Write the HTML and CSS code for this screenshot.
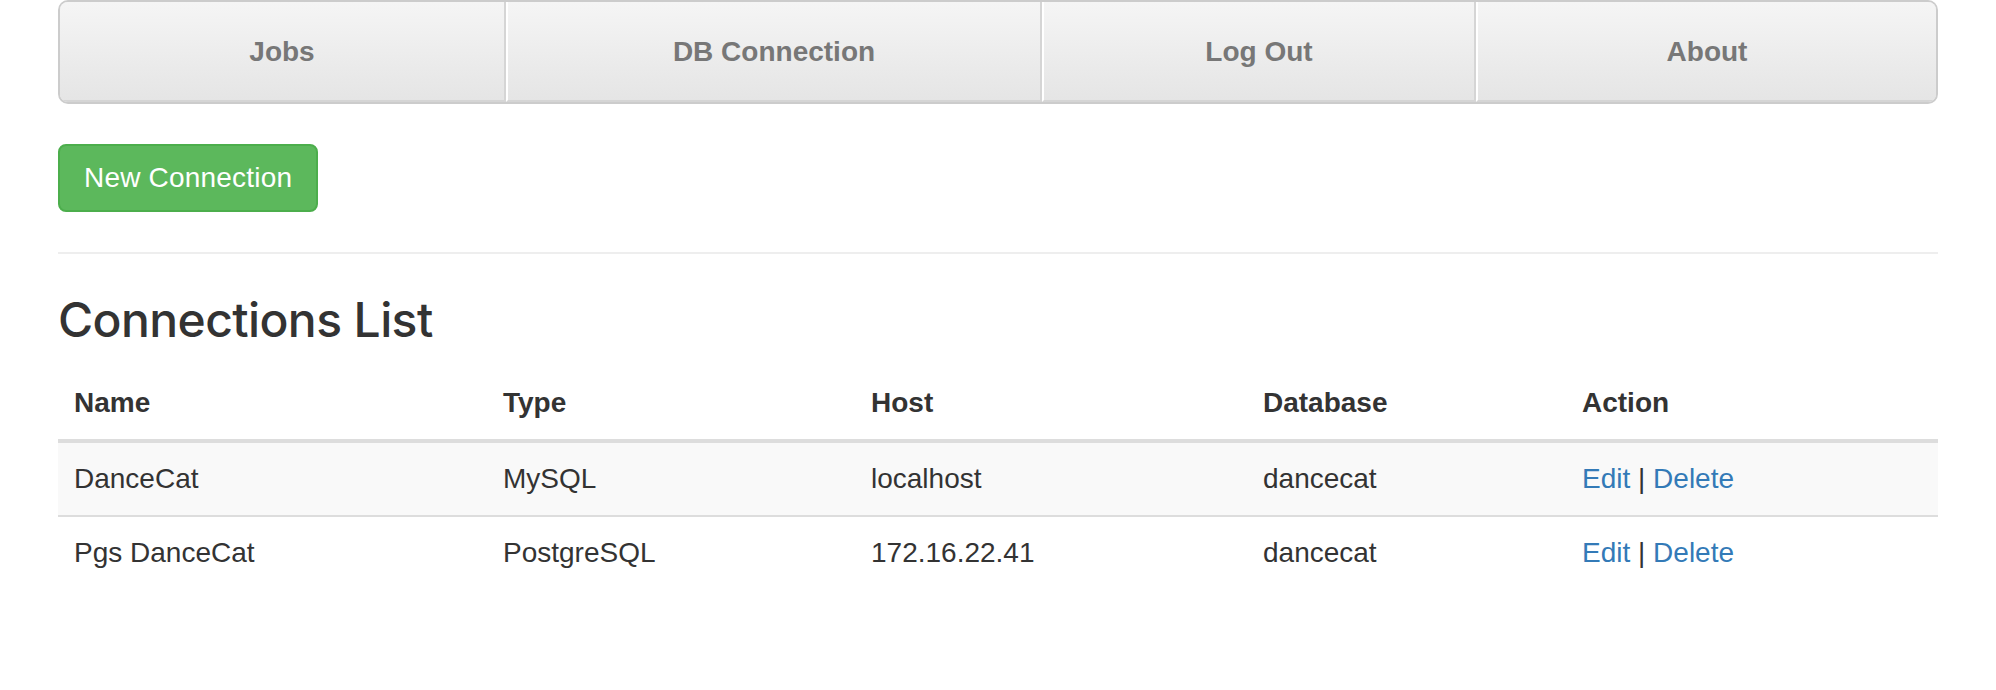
FILE: index.html
```html
<!DOCTYPE html>
<html lang="en">
<head>
<meta charset="utf-8">
<title>DanceCat - Connections</title>
<link rel="stylesheet" href="styles.css">
</head>
<body>
<div class="container">
  <nav class="masthead">
    <ul class="nav-justified">
      <li><a href="#">Jobs</a></li>
      <li><a href="#">DB Connection</a></li>
      <li><a href="#">Log Out</a></li>
      <li><a href="#">About</a></li>
    </ul>
  </nav>

  <a href="#" class="btn btn-success">New Connection</a>

  <hr class="divider">

  <h3 class="page-title">Connections List</h3>

  <table class="table">
    <colgroup>
      <col class="col-name">
      <col class="col-type">
      <col class="col-host">
      <col class="col-db">
      <col class="col-action">
    </colgroup>
    <thead>
      <tr>
        <th>Name</th>
        <th>Type</th>
        <th>Host</th>
        <th>Database</th>
        <th>Action</th>
      </tr>
    </thead>
    <tbody>
      <tr class="odd">
        <td>DanceCat</td>
        <td>MySQL</td>
        <td>localhost</td>
        <td>dancecat</td>
        <td><a href="#" class="link">Edit</a> | <a href="#" class="link">Delete</a></td>
      </tr>
      <tr>
        <td>Pgs DanceCat</td>
        <td>PostgreSQL</td>
        <td>172.16.22.41</td>
        <td>dancecat</td>
        <td><a href="#" class="link">Edit</a> | <a href="#" class="link">Delete</a></td>
      </tr>
    </tbody>
  </table>
</div>
</body>
</html>
```

FILE: styles.css
```css
* {
  box-sizing: border-box;
}

html, body {
  margin: 0;
  padding: 0;
  background: #fff;
}

body {
  font-family: "Liberation Sans", Arial, Helvetica, sans-serif;
  font-size: 28px;
  line-height: 40px;
  color: #333;
}

.container {
  margin: 0 58px;
}

/* Justified nav */
.nav-justified {
  list-style: none;
  margin: 0;
  padding: 0;
  display: grid;
  grid-template-columns: 446px 536px 434px 460px;
  background-color: #eee;
  border: 2px solid #ccc;
  border-radius: 10px;
  overflow: hidden;
}

.nav-justified > li > a {
  display: block;
  padding: 30px 0 28px;
  font-weight: bold;
  color: #777;
  text-align: center;
  text-decoration: none;
  background-color: #e5e5e5;
  background-image: linear-gradient(to bottom, #f5f5f5 0%, #e5e5e5 100%);
  border-bottom: 2px solid #d5d5d5;
  border-right: 2px solid #d5d5d5;
  border-left: 2px solid #fff;
}

.nav-justified > li:first-child > a {
  border-left: 0;
}

.nav-justified > li:last-child > a {
  border-right: 0;
}

/* Button */
.btn {
  display: inline-block;
  margin-top: 40px;
  padding: 12px 24px;
  font-size: 28px;
  line-height: 40px;
  letter-spacing: 0.2px;
  border: 2px solid transparent;
  border-radius: 8px;
  text-decoration: none;
  white-space: nowrap;
}

.btn-success {
  color: #fff;
  background-color: #5cb85c;
  border-color: #4cae4c;
}

/* Divider */
.divider {
  margin: 40px 0 0;
  border: 0;
  border-top: 2px solid #eee;
  height: 0;
}

/* Heading */
.page-title {
  margin: 40px 0 20px;
  font-family: Inter, "Liberation Sans", Arial, sans-serif;
  font-size: 48px;
  font-weight: 500;
  letter-spacing: -0.6px;
  line-height: 1.1;
  color: #333;
}

/* Table */
.table {
  width: 100%;
  border-collapse: collapse;
  border-spacing: 0;
  table-layout: fixed;
}

.col-name { width: 429px; }
.col-type { width: 368px; }
.col-host { width: 392px; }
.col-db { width: 319px; }
.col-action { width: 372px; }

.table th,
.table td {
  padding: 16px;
  line-height: 40px;
  text-align: left;
  vertical-align: top;
}

.table th {
  font-weight: bold;
  border-bottom: 4px solid #ddd;
}

.table td {
  border-top: 2px solid #ddd;
}

.table tbody tr.odd {
  background-color: #f9f9f9;
}

.link {
  color: #337ab7;
  text-decoration: none;
}
```
